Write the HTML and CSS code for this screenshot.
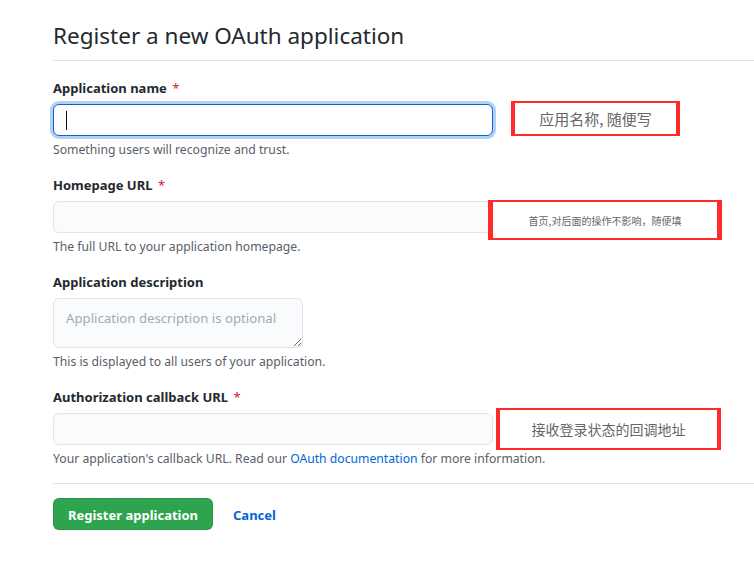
FILE: index.html
```html
<!DOCTYPE html>
<html lang="en">
<head>
<meta charset="utf-8">
<title>Register a new OAuth application</title>
<link rel="stylesheet" href="styles.css">
</head>
<body>
<div class="page">
  <div class="header">
    <h1 class="title">Register a new OAuth application</h1>
  </div>
  <form class="form">
    <div class="group">
      <label class="label">Application name <span class="req">*</span></label>
      <div class="field-wrap">
        <input class="input input-focus" type="text">
        <span class="caret"></span>
      </div>
      <p class="note">Something users will recognize and trust.</p>
    </div>
    <div class="group">
      <label class="label">Homepage URL <span class="req">*</span></label>
      <input class="input" type="text">
      <p class="note">The full URL to your application homepage.</p>
    </div>
    <div class="group">
      <label class="label">Application description</label>
      <textarea class="textarea" placeholder="Application description is optional"></textarea>
      <p class="note">This is displayed to all users of your application.</p>
    </div>
    <div class="group group-last">
      <label class="label">Authorization callback URL <span class="req">*</span></label>
      <input class="input" type="text">
      <p class="note">Your application's callback URL. Read our <a class="link" href="#">OAuth documentation</a> for more information.</p>
    </div>
    <div class="actions">
      <button type="button" class="btn">Register application</button>
      <a class="cancel" href="#">Cancel</a>
    </div>
  </form>

  <div class="anno anno-1">应用名称, 随便写</div>
  <div class="anno anno-2">首页,对后面的操作不影响，随便填</div>
  <div class="anno anno-3">接收登录状态的回调地址</div>
</div>
</body>
</html>
```

FILE: styles.css
```css
html, body {
  margin: 0;
  padding: 0;
  background: #ffffff;
}

body {
  font-family: "Noto Sans", "Open Sans", "Noto Sans CJK SC", sans-serif;
  color: #24292e;
  font-size: 14px;
}

.page {
  position: relative;
  padding: 21px 0 0 53px;
}

.header {
  padding-bottom: 9px;
  border-bottom: 1px solid #e1e4e8;
}

.title {
  margin: 0;
  font-size: 22.5px;
  line-height: 30px;
  font-weight: 400;
  color: #24292e;
}

.form {
  padding-top: 17px;
  display: flex;
  flex-direction: column;
}

.group {
  display: flex;
  flex-direction: column;
  align-items: flex-start;
  margin-bottom: 16px;
}

.group-last {
  margin-bottom: 0;
}

.label {
  font-size: 13px;
  font-weight: 700;
  line-height: 20px;
  margin-bottom: 6px;
  color: #24292e;
}

.req {
  color: #cb2431;
  font-weight: 400;
  margin-left: 2px;
}

.field-wrap {
  position: relative;
}

.input {
  box-sizing: border-box;
  width: 440px;
  height: 32px;
  margin: 0;
  padding: 5px 12px;
  font: inherit;
  font-size: 14px;
  background: #fafbfc;
  border: 1px solid #e1e4e8;
  border-radius: 6px;
  outline: none;
}

.input-focus {
  background: #ffffff;
  border-color: #0366d6;
  box-shadow: 0 0 0 3px rgba(3, 102, 214, 0.3);
  caret-color: transparent;
}

.caret {
  position: absolute;
  left: 13px;
  top: 7px;
  width: 1px;
  height: 19px;
  background: #111;
}

.textarea {
  box-sizing: border-box;
  width: 250px;
  height: 50px;
  margin: 0;
  padding: 9px 12px;
  font: inherit;
  font-size: 13.2px;
  line-height: 20px;
  color: #24292e;
  background: #fafbfc;
  border: 1px solid #e1e4e8;
  border-radius: 6px;
  outline: none;
  resize: vertical;
}

.textarea::placeholder {
  color: #a3aab1;
}

.note {
  margin: 5px 0 0;
  font-size: 12.2px;
  line-height: 18px;
  color: #586069;
}

.link {
  color: #0366d6;
  text-decoration: none;
}

.actions {
  margin-top: 15px;
  padding-top: 14px;
  border-top: 1px solid #e1e4e8;
  display: flex;
  align-items: center;
  gap: 20px;
}

.btn {
  box-sizing: border-box;
  height: 32px;
  width: 160px;
  padding: 1px 0 0;
  font: inherit;
  font-size: 13px;
  font-weight: 700;
  color: #ffffff;
  background: #2ea44f;
  border: 1px solid rgba(27, 31, 35, 0.15);
  border-radius: 6px;
  cursor: pointer;
}

.cancel {
  color: #0366d6;
  font-weight: 700;
  font-size: 13px;
  text-decoration: none;
  padding-top: 1px;
}

.anno {
  position: absolute;
  box-sizing: border-box;
  background: #ffffff;
  border: 2px solid #ff2b2b;
  border-left-width: 4px;
  border-right-width: 4px;
  color: #666666;
  display: flex;
  align-items: center;
  justify-content: center;
  font-family: "Noto Sans CJK SC", "Noto Sans", sans-serif;
}

.anno-1 {
  left: 511px;
  top: 101px;
  width: 169px;
  height: 35px;
  font-size: 15px;
}

.anno-2 {
  left: 488px;
  top: 200px;
  width: 234px;
  height: 40px;
  font-size: 10px;
  border-left-width: 5px;
  border-right-width: 5px;
}

.anno-3 {
  left: 496px;
  top: 408px;
  width: 225px;
  height: 42px;
  font-size: 14px;
}
```
